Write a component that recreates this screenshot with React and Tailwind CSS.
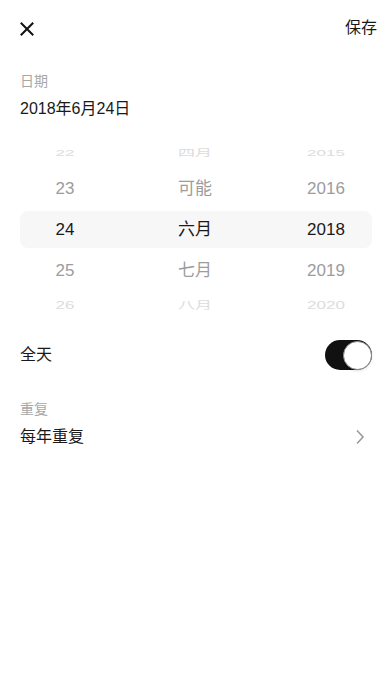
import React from "react";

const font = { fontFamily: '"Liberation Sans", "Noto Sans CJK SC", sans-serif' };

const days = ["22", "23", "24", "25", "26"];
const months = ["四月", "可能", "六月", "七月", "八月"];
const years = ["2015", "2016", "2018", "2019", "2020"];

function PickerRow({ index, className, textClass }) {
  return (
    <div className={`grid grid-cols-[90px_1fr_92px] items-center ${className}`}>
      <span className={`text-center ${textClass}`}>{days[index]}</span>
      <span className={`text-center ${textClass}`}>{months[index]}</span>
      <span className={`text-center ${textClass}`}>{years[index]}</span>
    </div>
  );
}

export default function App() {
  return (
    <div className="w-[392px] h-[696px] bg-white text-[#1a1a1a]" style={font}>
      {/* header */}
      <div className="h-[56px] pl-5 pr-[15px] flex items-center justify-between">
        <svg width="14" height="14" viewBox="0 0 14 14" className="mt-[1px]">
          <path d="M1.5 1.5 L12.5 12.5 M12.5 1.5 L1.5 12.5" stroke="#111" strokeWidth="2" strokeLinecap="square" />
        </svg>
        <span className="text-[16px] leading-6">保存</span>
      </div>

      <div className="px-5">
        <div className="mt-[15px] text-[14px] leading-5 text-[#a8a8a8]">日期</div>
        <div className="mt-[6px] text-[16px] leading-6">2018年6月24日</div>

        {/* wheel picker */}
        <div className="mt-[17px] h-[172px] overflow-hidden flex flex-col text-[17px]">
          <PickerRow
            index={0}
            className="h-[30px] shrink-0"
            textClass="text-[#dcdcdc] scale-y-[0.55] block"
          />
          <PickerRow index={1} className="h-[41px] shrink-0" textClass="text-[#9c9c9c]" />
          <PickerRow
            index={2}
            className="h-[37px] shrink-0 my-[2px] bg-[#f7f7f7] rounded-lg"
            textClass="text-[#1a1a1a]"
          />
          <PickerRow index={3} className="h-[41px] shrink-0" textClass="text-[#9c9c9c]" />
          <PickerRow
            index={4}
            className="h-[30px] shrink-0"
            textClass="text-[#dcdcdc] scale-y-[0.6] block"
          />
        </div>

        {/* all day */}
        <div className="mt-[21px] h-[48px] flex items-center justify-between">
          <span className="text-[16px] leading-6">全天</span>
          <div className="w-[47px] h-[30px] rounded-full bg-[#111] flex items-center justify-end">
            <div className="w-[29px] h-[29px] rounded-full bg-white border border-[#8a8a8a] shadow-sm" />
          </div>
        </div>

        {/* repeat */}
        <div className="mt-5 text-[14px] leading-5 text-[#a8a8a8]">重复</div>
        <div className="mt-[6px] h-6 flex items-center justify-between">
          <span className="text-[16px] leading-6">每年重复</span>
          <svg width="10" height="16" viewBox="0 0 10 16" className="mr-[7px]">
            <path d="M2 1.5 L8 8 L2 14.5" fill="none" stroke="#9a9a9a" strokeWidth="1.6" />
          </svg>
        </div>
      </div>
    </div>
  );
}
